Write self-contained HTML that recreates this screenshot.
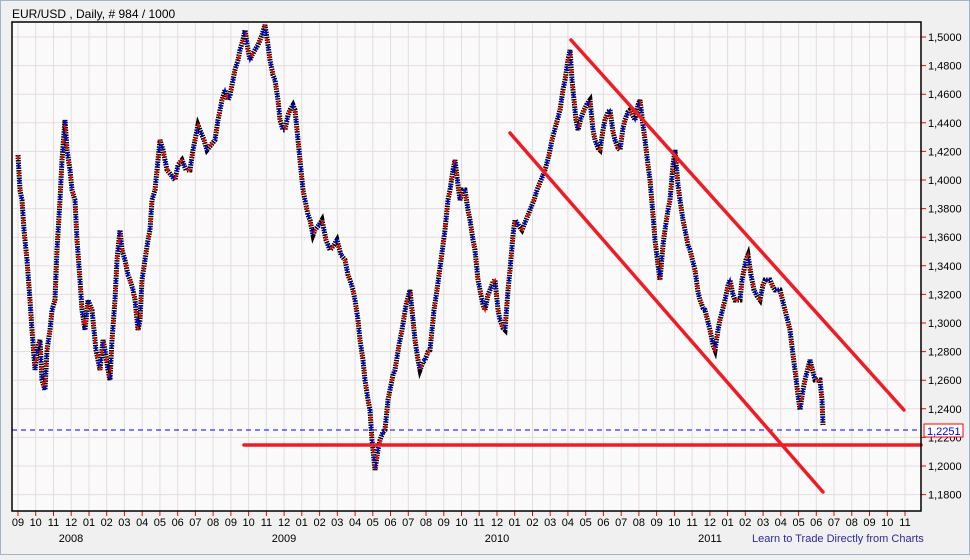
<!DOCTYPE html>
<html><head><meta charset="utf-8"><style>
body{margin:0;background:#f0f0f0;width:970px;height:555px;overflow:hidden;font-family:"Liberation Sans",sans-serif}
</style></head><body>
<svg width="970" height="555" xmlns="http://www.w3.org/2000/svg" font-family="Liberation Sans, sans-serif" font-size="11">
<defs>
<polyline id="pr" fill="none" points="18,155 20,190 22,200 24,230 25,240 27,260 30,300 32,330 35,370 37,350 40,340 42,380 45,390 47,350 50,330 52,310 55,300 57,250 60,200 62,160 65,120 67,150 70,170 72,190 75,200 77,240 80,280 82,310 85,330 88,300 92,310 96,350 100,370 103,340 105,350 108,370 110,380 112,340 115,300 117,260 120,230 122,250 125,260 128,275 130,280 133,290 135,300 138,330 140,320 142,280 145,260 148,240 150,230 152,200 155,190 158,160 160,140 163,150 167,170 171,175 175,180 178,165 182,160 186,170 190,170 193,150 195,140 198,125 200,130 204,140 207,150 211,145 215,140 218,120 220,110 222,100 225,90 228,100 230,95 233,80 235,70 238,60 240,50 243,40 245,30 248,50 250,60 252,55 255,50 258,45 260,40 262,35 265,25 268,45 270,60 273,75 275,80 278,100 280,120 283,130 285,130 288,115 290,110 293,105 295,110 298,140 300,160 303,190 305,200 308,215 310,220 313,235 315,230 319,225 322,220 326,240 330,250 334,245 337,240 341,255 345,260 348,275 350,280 353,290 355,300 358,320 360,340 363,360 365,380 368,400 370,410 372,440 375,470 378,450 380,440 383,432 385,430 388,400 390,390 393,375 395,370 399,345 402,330 406,305 410,290 413,320 415,340 418,360 420,370 423,362 425,360 428,352 430,350 434,310 437,290 441,260 445,230 448,200 450,190 453,170 455,160 458,185 460,200 463,190 465,190 468,210 470,220 473,240 475,250 478,280 480,290 483,305 485,310 488,295 490,290 493,282 495,280 498,310 500,320 503,328 505,330 508,290 510,270 513,235 515,220 519,226 522,230 526,220 530,210 534,200 537,190 541,180 545,170 549,155 552,140 556,125 560,110 563,90 565,80 568,60 570,50 572,80 574,100 576,120 578,130 581,118 584,110 587,104 590,100 593,130 595,140 598,148 600,150 603,130 605,120 608,112 610,110 613,132 615,140 618,148 620,150 623,128 625,120 628,112 630,110 633,116 635,120 638,105 640,100 643,125 645,140 648,165 650,180 653,215 655,240 658,265 660,280 663,245 665,230 668,210 670,200 673,165 675,150 678,185 680,200 683,220 685,230 688,245 690,250 693,262 695,270 698,292 700,300 703,308 705,310 708,322 710,330 713,345 715,350 718,330 720,320 723,308 725,300 728,286 730,280 733,295 735,300 738,300 740,300 742,280 744,270 746,260 748,255 751,275 754,290 757,296 760,300 763,285 765,280 768,280 770,280 773,287 775,290 778,290 780,290 783,302 785,310 788,322 790,330 793,355 795,370 798,395 800,410 803,390 805,380 808,368 810,360 813,372 815,380 818,380 820,380 822,400 823,425"/>
</defs>
<rect x="0" y="0" width="970" height="555" fill="#f0f0f0"/>
<rect x="0.5" y="0.5" width="969" height="554" fill="none" stroke="#a0b4cc"/>
<text x="12" y="18" font-size="12">EUR/USD , Daily, # 984 / 1000</text>
<rect x="12" y="22" width="909" height="489" fill="#fafafa"/>
<g stroke="#e6dcdd" stroke-width="1">
<path d="M12 37H921M12 65.6H921M12 94.2H921M12 122.8H921M12 151.4H921M12 180H921M12 208.6H921M12 237.2H921M12 265.8H921M12 294.4H921M12 323H921M12 351.6H921M12 380.2H921M12 408.8H921M12 437.4H921M12 466H921M12 494.6H921"/>
<path d="M18 22V511M35.7 22V511M53.5 22V511M71.2 22V511M89 22V511M106.7 22V511M124.4 22V511M142.2 22V511M159.9 22V511M177.7 22V511M195.4 22V511M213.1 22V511M230.9 22V511M248.6 22V511M266.4 22V511M284.1 22V511M301.8 22V511M319.6 22V511M337.3 22V511M355.1 22V511M372.8 22V511M390.5 22V511M408.3 22V511M426 22V511M443.8 22V511M461.5 22V511M479.2 22V511M497 22V511M514.7 22V511M532.5 22V511M550.2 22V511M567.9 22V511M585.7 22V511M603.4 22V511M621.2 22V511M638.9 22V511M656.6 22V511M674.4 22V511M692.1 22V511M709.9 22V511M727.6 22V511M745.3 22V511M763.1 22V511M780.8 22V511M798.6 22V511M816.3 22V511M834 22V511M851.8 22V511M869.5 22V511M887.3 22V511M905 22V511"/>
</g>
<g stroke="#ff0000" stroke-width="1">
<path d="M18 511v5M35.7 511v5M53.5 511v5M71.2 511v5M89 511v5M106.7 511v5M124.4 511v5M142.2 511v5M159.9 511v5M177.7 511v5M195.4 511v5M213.1 511v5M230.9 511v5M248.6 511v5M266.4 511v5M284.1 511v5M301.8 511v5M319.6 511v5M337.3 511v5M355.1 511v5M372.8 511v5M390.5 511v5M408.3 511v5M426 511v5M443.8 511v5M461.5 511v5M479.2 511v5M497 511v5M514.7 511v5M532.5 511v5M550.2 511v5M567.9 511v5M585.7 511v5M603.4 511v5M621.2 511v5M638.9 511v5M656.6 511v5M674.4 511v5M692.1 511v5M709.9 511v5M727.6 511v5M745.3 511v5M763.1 511v5M780.8 511v5M798.6 511v5M816.3 511v5M834 511v5M851.8 511v5M869.5 511v5M887.3 511v5M905 511v5"/>
<path d="M921 37h5M921 65.6h5M921 94.2h5M921 122.8h5M921 151.4h5M921 180h5M921 208.6h5M921 237.2h5M921 265.8h5M921 294.4h5M921 323h5M921 351.6h5M921 380.2h5M921 408.8h5M921 437.4h5M921 466h5M921 494.6h5"/>
</g>
<use href="#pr" stroke="#000" stroke-width="5" stroke-dasharray="1.5 1"/>
<use href="#pr" stroke="#ff0000" stroke-width="2" stroke-dasharray="5 11"/>
<use href="#pr" stroke="#0000ff" stroke-width="2" stroke-dasharray="5 11" stroke-dashoffset="8"/>
<line x1="12" x2="921" y1="430" y2="430" stroke="#0000ff" stroke-width="1" stroke-dasharray="5 4"/>
<g stroke="#ee1c25" stroke-width="3.5" stroke-linecap="round">
<line x1="571" y1="40" x2="904" y2="410"/>
<line x1="510" y1="133" x2="823" y2="492"/>
<line x1="244" y1="445" x2="921" y2="445"/>
</g>
<rect x="12" y="22" width="909" height="489" fill="none" stroke="#000" stroke-width="1.5"/>
<g font-size="11" fill="#000">
<text x="928" y="41">1,5000</text><text x="928" y="69.6">1,4800</text><text x="928" y="98.2">1,4600</text><text x="928" y="126.8">1,4400</text><text x="928" y="155.4">1,4200</text><text x="928" y="184">1,4000</text><text x="928" y="212.6">1,3800</text><text x="928" y="241.2">1,3600</text><text x="928" y="269.8">1,3400</text><text x="928" y="298.4">1,3200</text><text x="928" y="327">1,3000</text><text x="928" y="355.6">1,2800</text><text x="928" y="384.2">1,2600</text><text x="928" y="412.8">1,2400</text><text x="928" y="441.4">1,2200</text><text x="928" y="470">1,2000</text><text x="928" y="498.6">1,1800</text>
</g>
<rect x="924" y="424" width="39" height="13" fill="#fff" stroke="#ff0000"/>
<text x="927" y="435" fill="#0000ff">1,2251</text>
<g text-anchor="middle" font-size="11">
<text x="18" y="526">09</text><text x="35.7" y="526">10</text><text x="53.5" y="526">11</text><text x="71.2" y="526">12</text><text x="89" y="526">01</text><text x="106.7" y="526">02</text><text x="124.4" y="526">03</text><text x="142.2" y="526">04</text><text x="159.9" y="526">05</text><text x="177.7" y="526">06</text><text x="195.4" y="526">07</text><text x="213.1" y="526">08</text><text x="230.9" y="526">09</text><text x="248.6" y="526">10</text><text x="266.4" y="526">11</text><text x="284.1" y="526">12</text><text x="301.8" y="526">01</text><text x="319.6" y="526">02</text><text x="337.3" y="526">03</text><text x="355.1" y="526">04</text><text x="372.8" y="526">05</text><text x="390.5" y="526">06</text><text x="408.3" y="526">07</text><text x="426" y="526">08</text><text x="443.8" y="526">09</text><text x="461.5" y="526">10</text><text x="479.2" y="526">11</text><text x="497" y="526">12</text><text x="514.7" y="526">01</text><text x="532.5" y="526">02</text><text x="550.2" y="526">03</text><text x="567.9" y="526">04</text><text x="585.7" y="526">05</text><text x="603.4" y="526">06</text><text x="621.2" y="526">07</text><text x="638.9" y="526">08</text><text x="656.6" y="526">09</text><text x="674.4" y="526">10</text><text x="692.1" y="526">11</text><text x="709.9" y="526">12</text><text x="727.6" y="526">01</text><text x="745.3" y="526">02</text><text x="763.1" y="526">03</text><text x="780.8" y="526">04</text><text x="798.6" y="526">05</text><text x="816.3" y="526">06</text><text x="834" y="526">07</text><text x="851.8" y="526">08</text><text x="869.5" y="526">09</text><text x="887.3" y="526">10</text><text x="905" y="526">11</text>
<text x="71" y="542">2008</text><text x="284" y="542">2009</text><text x="497" y="542">2010</text><text x="710" y="542">2011</text>
</g>
<text x="752" y="542" fill="#2b2b9a" font-size="11">Learn to Trade Directly from Charts</text>
</svg>
</body></html>
